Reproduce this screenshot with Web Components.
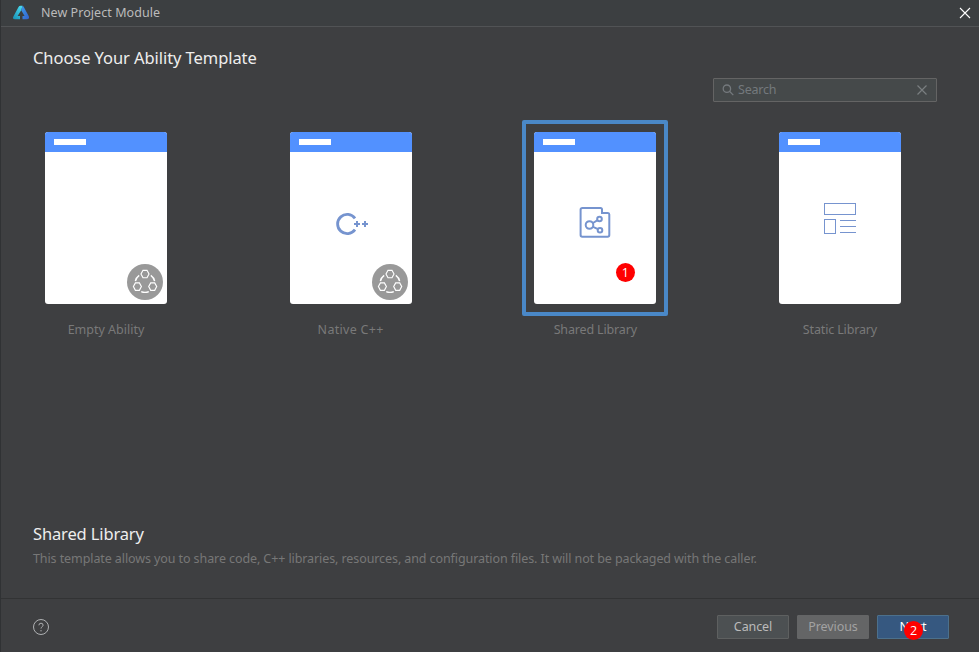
<!DOCTYPE html>
<html lang="en">
<head>
<meta charset="utf-8">
<title>New Project Module</title>
<style>
html,body{margin:0;height:100%;background:#3e3f41;overflow:hidden}
body{font-family:"Noto Sans","Open Sans",sans-serif}
</style>
</head>
<body>
<module-wizard></module-wizard>
<script>
const define = (name, markup) => customElements.define(name, class extends HTMLElement {
  constructor() {
    super();
    this.attachShadow({ mode: 'open' }).innerHTML = markup;
  }
});

define('title-bar', `<style>
:host{display:flex;align-items:center;height:26px;padding:0 8px 0 11px;background:#3c3f41;border-bottom:1px solid #515355;color:#bbb;font-size:12.5px;line-height:26px}
.logo{margin-right:11px}
span{flex:1;letter-spacing:.06px}
svg{display:block}
</style>
<svg class="logo" width="18" height="16" viewBox="0 0 18 16">
<defs><linearGradient id="a" x1="0" y1="1" x2=".6" y2="0"><stop offset="0" stop-color="#178fb5"/><stop offset="1" stop-color="#45d5ea"/></linearGradient>
<linearGradient id="b" x1="0" y1="0" x2="1" y2="1"><stop offset="0" stop-color="#3b9bea"/><stop offset="1" stop-color="#3462cf"/></linearGradient></defs>
<path d="M6.500 2Q7.200.800 8.600.800H10.600L9.200 5.200 5.600 10.900H8V14.300H3Q0 14.200 1.400 11.500z" fill="url(#a)"/>
<path d="M10.600.800Q11.300 1 11.800 2L16.800 11.300Q17.800 14.300 14.800 14.300H10.500V10.900H12.600L9.200 5.200z" fill="url(#b)"/>
</svg><span><slot></slot></span>
<svg width="12" height="12" viewBox="0 0 12 12" stroke="#fff" stroke-width="1.1"><path d="M1 1l10 10M11 1L1 11"/></svg>`);

define('search-box', `<style>
:host{display:flex;align-items:center;box-sizing:border-box;width:224px;height:24px;padding:0 8px;border:1px solid #646464;border-radius:1px;background:#45494a;color:#74797d;font-size:12.5px;line-height:22px}
span{flex:1;margin-left:4px;letter-spacing:-.2px}
svg{display:block}
</style>
<svg width="12" height="12" viewBox="0 0 12 12" fill="none" stroke="#74797d" stroke-width="1.3"><circle cx="4.900" cy="4.700" r="3.700"/><path d="M7.500 7.300l3.800 3.800"/></svg>
<span><slot></slot></span>
<svg width="12" height="12" viewBox="0 0 12 12" stroke="#7a7e80" stroke-width="1.2"><path d="M1.500 1.500l9 9M10.500 1.500l-9 9"/></svg>`);

define('service-mark', `<style>:host{display:block;width:36px;height:36px}svg{display:block}</style>
<svg width="36" height="36" viewBox="0 0 36 36" fill="none" stroke="#fff" stroke-width="1.150">
<circle cx="18" cy="18" r="18" fill="#999" stroke="none"/>
<path d="M16 6.300h4l2 3.700-2 3.700h-4l-2-3.700zM8.400 18.900h4l2 3.700-2 3.700h-4l-2-3.700zM23.700 18.900h4l2 3.700-2 3.700h-4l-2-3.700z"/>
<path d="M12.200 11.300Q9 13.500 8.400 17.200M23.800 11.300Q27 13.500 27.600 17.200M14.200 27.600Q18 29.200 21.800 27.600" stroke-width="1.400"/></svg>`);

define('step-dot', `<style>:host{display:block;width:19px;height:19px;border-radius:50%;background:#f00;color:#fff;text-align:center;font:12.5px/19px "Open Sans","Noto Sans",sans-serif}</style><slot></slot>`);

define('template-card', `<style>
:host{display:block;width:146px;color:#797979;font-size:12.5px}
.frame{box-sizing:border-box;width:146px;height:196px;padding:8px;border:4px solid transparent;border-radius:2px}
:host([selected]) .frame{border-color:#4a88c7}
.page{position:relative;display:flex;flex-direction:column;height:172px;border-radius:3px;overflow:hidden;background:#fff}
.head{height:20px;background:#5291ff;padding:7px 0 0 9px;box-sizing:border-box}
.head i{display:block;width:32px;height:6px;background:#fff}
.icon{display:flex;justify-content:center;padding-top:50px}
.label{text-align:center;height:20px;line-height:20px;margin-top:4px;white-space:nowrap;letter-spacing:var(--label-spacing,0)}
slot[name=badge]{position:absolute;display:block;right:4px;bottom:4px}
slot[name=step]{position:absolute;display:block;left:81.5px;top:130.5px}
</style>
<div class="frame"><div class="page"><div class="head"><i></i></div><div class="icon"><slot name="icon"></slot></div><slot name="badge"></slot><slot name="step"></slot></div></div>
<div class="label"><slot></slot></div>`);

define('dialog-button', `<style>
:host{display:block;position:relative;box-sizing:border-box;width:72px;height:24px;border:1px solid #5e6060;border-radius:1px;background:#4c5052;color:#bbb;font-size:12.5px;line-height:22px;text-align:center;letter-spacing:-.1px}
:host([kind=muted]){background:#646566;border-color:#646566;color:#a2a2a2}
:host([kind=primary]){background:#365880;border-color:#4c708c;color:#fff}
slot[name=step]{position:absolute;display:block;left:26px;top:5px}
</style><slot></slot><slot name="step"></slot>`);

define('module-wizard', `<style>
:host{display:flex;flex-direction:column;box-sizing:border-box;width:979px;height:652px;border-left:1px solid #303234;background:#3e3f41}
main{flex:1;display:flex;flex-direction:column;padding:0 32px}
h1,h2{margin:0;font-weight:400;font-size:16.5px;line-height:24px;color:#eee;letter-spacing:-.07px}
h1{margin-top:19px;align-self:flex-start}
h2{margin-top:auto;align-self:flex-start;letter-spacing:-.14px}
search-box{align-self:flex-end;margin:8px 10px 0 0}
.cards{display:flex;justify-content:space-between;margin:18px 34px 0 0}
p{margin:3px 0 29px;height:20px;font-size:12.5px;line-height:20px;color:#777;white-space:nowrap;letter-spacing:-.092px}
footer{display:flex;align-items:center;gap:8px;box-sizing:border-box;height:54px;padding:2px 30px 0 32px;border-top:1px solid #323334}
.help{display:block;margin-right:auto}
svg{display:block}
</style>
<title-bar>New Project Module</title-bar>
<main>
<h1><span>Choose Your Ability Template</span></h1>
<search-box>Search</search-box>
<div class="cards">
<template-card>Empty Ability<service-mark slot="badge"></service-mark></template-card>
<template-card style="--label-spacing:.3px">Native C++<svg slot="icon" width="34" height="44" viewBox="0 0 34 44" fill="none" stroke="#7694cf"><path d="M21 16.400A9.600 9.600 0 1 0 21 27.600" stroke-width="2.800"/><path d="M20 22h6M23 19v6M28 22h6M31 19v6" stroke-width="2"/></svg><service-mark slot="badge"></service-mark></template-card>
<template-card selected style="--label-spacing:-.15px">Shared Library<svg slot="icon" width="32" height="40" viewBox="0 0 32 40" fill="none" stroke="#7694cf" stroke-width="2"><path d="M3.500 6H21.500Q23 6 23 7.500V11H29Q30.300 11 30.300 12.500V33Q30.300 34.700 28.600 34.700H3.300Q1.600 34.700 1.600 33V7.500Q1.600 6 3.500 6z"/><circle cx="10.500" cy="23" r="3.800"/><circle cx="20.500" cy="17" r="2.300"/><circle cx="21" cy="28.200" r="2.300"/><path d="M14 21l4.600-2.900M14 24.800l5 2.400"/></svg><step-dot slot="step">1</step-dot></template-card>
<template-card style="--label-spacing:-.15px">Static Library<svg slot="icon" width="32" height="34" viewBox="0 0 32 34" fill="none" stroke="#7694cf"><rect x=".5" y="1.500" width="31" height="11"/><rect x=".5" y="17.500" width="11" height="14"/><path d="M16 18.500h16M16 24.500h16M16 30.500h16"/></svg></template-card>
</div>
<h2><span>Shared Library</span></h2>
<p><span>This template allows you to share code, C++ libraries, resources, and configuration files. It will not be packaged with the caller.</span></p>
</main>
<footer>
<svg class="help" width="16" height="16" viewBox="0 0 16 16" fill="none" stroke="#afb1b3"><circle cx="8" cy="8" r="7.500"/><path d="M5.900 6.300Q5.900 4.200 8 4.200T10.100 6.200C10.100 7.700 8 7.800 8 9.500M8 11v1.400"/></svg>
<dialog-button>Cancel</dialog-button><dialog-button kind="muted">Previous</dialog-button><dialog-button kind="primary">Next<step-dot slot="step">2</step-dot></dialog-button>
</footer>`);
</script>
</body>
</html>
